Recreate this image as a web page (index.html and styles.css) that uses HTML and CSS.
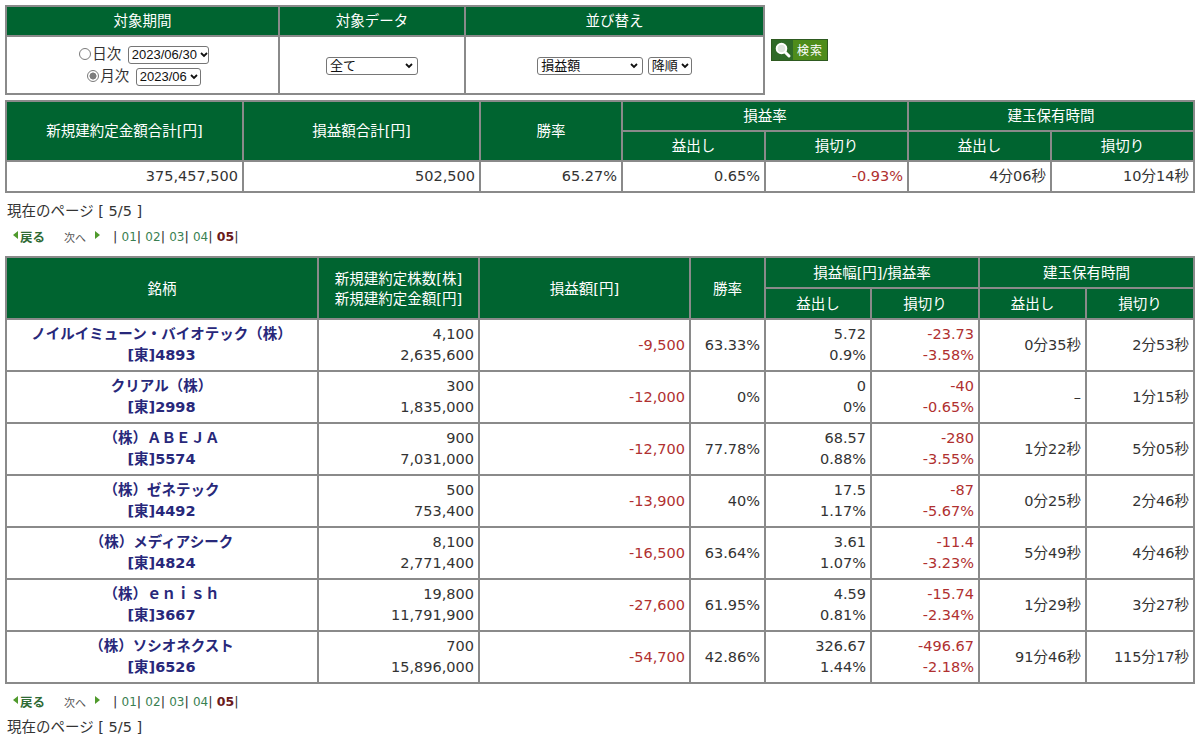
FILE: index.html
```html
<!DOCTYPE html>
<html lang="ja">
<head>
<meta charset="utf-8">
<title>取引実績</title>
<link rel="stylesheet" href="styles.css">
</head>
<body>
<div class="search-bar">
  <table class="grid filter">
    <colgroup><col class="f1"><col class="f2"><col class="f3"></colgroup>
    <tr><th>対象期間</th><th>対象データ</th><th>並び替え</th></tr>
    <tr>
      <td class="center">
        <div class="period"><span class="radio"></span>日次 <span class="select s-day">2023/06/30<svg class="chev" viewBox="0 0 8 6" width="8" height="6"><path d="M1 1L4 4L7 1" fill="none" stroke="#111" stroke-width="1.8"/></svg></span></div>
        <div class="period"><span class="radio on"></span>月次 <span class="select s-month">2023/06<svg class="chev" viewBox="0 0 8 6" width="8" height="6"><path d="M1 1L4 4L7 1" fill="none" stroke="#111" stroke-width="1.8"/></svg></span></div>
      </td>
      <td class="center"><span class="select s-data">全て<svg class="chev" viewBox="0 0 8 6" width="8" height="6"><path d="M1 1L4 4L7 1" fill="none" stroke="#111" stroke-width="1.8"/></svg></span></td>
      <td class="center"><span class="select s-sort">損益額<svg class="chev" viewBox="0 0 8 6" width="8" height="6"><path d="M1 1L4 4L7 1" fill="none" stroke="#111" stroke-width="1.8"/></svg></span> <span class="select s-order">降順<svg class="chev" viewBox="0 0 8 6" width="8" height="6"><path d="M1 1L4 4L7 1" fill="none" stroke="#111" stroke-width="1.8"/></svg></span></td>
    </tr>
  </table>
  <div class="search-btn">
    <span class="btn-icon"><svg viewBox="0 0 20 20" width="20" height="20"><circle cx="8.5" cy="8.5" r="4.8" fill="#dfe6df" stroke="#fff" stroke-width="2"/><path d="M12.2 12.2L16 16" stroke="#fff" stroke-width="3" stroke-linecap="round"/></svg></span>
    <span class="btn-label">検索</span>
  </div>
</div>

<table class="grid summary">
  <colgroup><col class="s1"><col class="s2"><col class="s3"><col class="s4"><col class="s5"><col class="s6"><col class="s7"></colgroup>
  <tr>
    <th rowspan="2">新規建約定金額合計[円]</th>
    <th rowspan="2">損益額合計[円]</th>
    <th rowspan="2">勝率</th>
    <th colspan="2">損益率</th>
    <th colspan="2">建玉保有時間</th>
  </tr>
  <tr><th>益出し</th><th>損切り</th><th>益出し</th><th>損切り</th></tr>
  <tr>
    <td>375,457,500</td>
    <td>502,500</td>
    <td>65.27%</td>
    <td>0.65%</td>
    <td class="neg">-0.93%</td>
    <td>4分06秒</td>
    <td>10分14秒</td>
  </tr>
</table>

<p class="page-info">現在のページ [ 5/5 ]</p>
<div class="pager">
  <span class="prev"><svg class="tri" viewBox="0 0 5 8" width="5" height="8"><path d="M5 0V8L0 4Z" fill="#4f9a2c"/></svg>戻る</span>
  <span class="next">次へ<svg class="tri" viewBox="0 0 5 8" width="5" height="8"><path d="M0 0V8L5 4Z" fill="#4f9a2c"/></svg></span>
  <span class="pages"><span class="bar">|</span> <a>01</a><span class="bar">|</span> <a>02</a><span class="bar">|</span> <a>03</a><span class="bar">|</span> <a>04</a><span class="bar">|</span> <b>05</b><span class="bar">|</span></span>
</div>

<table class="grid main">
  <colgroup><col class="m1"><col class="m2"><col class="m3"><col class="m4"><col class="m5"><col class="m6"><col class="m7"><col class="m8"></colgroup>
  <tr>
    <th rowspan="2">銘柄</th>
    <th rowspan="2">新規建約定株数[株]<br>新規建約定金額[円]</th>
    <th rowspan="2">損益額[円]</th>
    <th rowspan="2">勝率</th>
    <th colspan="2">損益幅[円]/損益率</th>
    <th colspan="2">建玉保有時間</th>
  </tr>
  <tr><th>益出し</th><th>損切り</th><th>益出し</th><th>損切り</th></tr>
  <tr>
    <td class="name">ノイルイミューン・バイオテック（株）<br>[東]4893</td>
    <td>4,100<br>2,635,600</td>
    <td class="neg">-9,500</td>
    <td>63.33%</td>
    <td>5.72<br>0.9%</td>
    <td class="neg">-23.73<br>-3.58%</td>
    <td>0分35秒</td>
    <td>2分53秒</td>
  </tr>
  <tr>
    <td class="name">クリアル（株）<br>[東]2998</td>
    <td>300<br>1,835,000</td>
    <td class="neg">-12,000</td>
    <td>0%</td>
    <td>0<br>0%</td>
    <td class="neg">-40<br>-0.65%</td>
    <td>–</td>
    <td>1分15秒</td>
  </tr>
  <tr>
    <td class="name">（株）ＡＢＥＪＡ<br>[東]5574</td>
    <td>900<br>7,031,000</td>
    <td class="neg">-12,700</td>
    <td>77.78%</td>
    <td>68.57<br>0.88%</td>
    <td class="neg">-280<br>-3.55%</td>
    <td>1分22秒</td>
    <td>5分05秒</td>
  </tr>
  <tr>
    <td class="name">（株）ゼネテック<br>[東]4492</td>
    <td>500<br>753,400</td>
    <td class="neg">-13,900</td>
    <td>40%</td>
    <td>17.5<br>1.17%</td>
    <td class="neg">-87<br>-5.67%</td>
    <td>0分25秒</td>
    <td>2分46秒</td>
  </tr>
  <tr>
    <td class="name">（株）メディアシーク<br>[東]4824</td>
    <td>8,100<br>2,771,400</td>
    <td class="neg">-16,500</td>
    <td>63.64%</td>
    <td>3.61<br>1.07%</td>
    <td class="neg">-11.4<br>-3.23%</td>
    <td>5分49秒</td>
    <td>4分46秒</td>
  </tr>
  <tr>
    <td class="name">（株）ｅｎｉｓｈ<br>[東]3667</td>
    <td>19,800<br>11,791,900</td>
    <td class="neg">-27,600</td>
    <td>61.95%</td>
    <td>4.59<br>0.81%</td>
    <td class="neg">-15.74<br>-2.34%</td>
    <td>1分29秒</td>
    <td>3分27秒</td>
  </tr>
  <tr>
    <td class="name">（株）ソシオネクスト<br>[東]6526</td>
    <td>700<br>15,896,000</td>
    <td class="neg">-54,700</td>
    <td>42.86%</td>
    <td>326.67<br>1.44%</td>
    <td class="neg">-496.67<br>-2.18%</td>
    <td>91分46秒</td>
    <td>115分17秒</td>
  </tr>
</table>

<div class="pager pager-bottom">
  <span class="prev"><svg class="tri" viewBox="0 0 5 8" width="5" height="8"><path d="M5 0V8L0 4Z" fill="#4f9a2c"/></svg>戻る</span>
  <span class="next">次へ<svg class="tri" viewBox="0 0 5 8" width="5" height="8"><path d="M0 0V8L5 4Z" fill="#4f9a2c"/></svg></span>
  <span class="pages"><span class="bar">|</span> <a>01</a><span class="bar">|</span> <a>02</a><span class="bar">|</span> <a>03</a><span class="bar">|</span> <a>04</a><span class="bar">|</span> <b>05</b><span class="bar">|</span></span>
</div>
<p class="page-info page-info-bottom">現在のページ [ 5/5 ]</p>
</body>
</html>
```

FILE: styles.css
```css
* { box-sizing: border-box; }
html, body { margin: 0; }
body {
  padding: 5px;
  background: #fff;
  color: #333;
  font-family: "DejaVu Sans", "Noto Sans CJK JP", sans-serif;
  font-size: 14.5px;
  line-height: 20px;
}

/* search area */
.search-bar { display: flex; align-items: center; gap: 6px; }

table.grid {
  border-collapse: separate;
  border-spacing: 0;
  border: 1px solid #8a8a8a;
  table-layout: fixed;
}
.grid th, .grid td { border: 1px solid #8a8a8a; }
.grid th {
  background: #006430;
  color: #fff;
  font-weight: normal;
  padding: 4px 4px;
  line-height: 20px;
  text-align: center;
}
.grid td {
  padding: 4px 4px;
  line-height: 21px;
  text-align: right;
  background: #fff;
  white-space: nowrap;
}

.filter { width: 760px; }
.f1 { width: 273px; }
.f2 { width: 186px; }
.f3 { width: 299px; }
.filter td.center { text-align: center; padding: 6px 4px; }
.period { line-height: 22px; height: 22px; padding-left: 3px; }

.radio {
  display: inline-block;
  width: 12px;
  height: 12px;
  border: 1px solid #7a7a7a;
  border-radius: 50%;
  background: #fff;
  vertical-align: -1px;
  margin-right: 1px;
}
.radio.on { background: radial-gradient(circle, #7d7d7d 0 3.2px, #fff 3.8px); }

.select {
  display: inline-flex;
  align-items: center;
  justify-content: space-between;
  height: 18px;
  padding: 0 4px 0 3px;
  border: 1px solid #767676;
  border-radius: 3px;
  background: #fff;
  color: #111;
  font-family: "Liberation Sans", "Noto Sans CJK JP", sans-serif;
  font-size: 13px;
  line-height: 16px;
  vertical-align: middle;
  text-align: left;
}
.period .select { margin-left: 2px; }
.chev { flex: none; margin-left: 3px; }
.s-day { width: 81px; }
.s-month { width: 65px; }
.s-data { width: 92px; }
.s-sort { width: 106px; }
.s-order { width: 44px; }

.search-btn {
  display: flex;
  height: 22px;
  width: 57px;
  border: 1px solid #2e5a20;
}
.btn-icon {
  width: 21px;
  background: #2f6a28;
  display: flex;
  align-items: center;
  justify-content: center;
}
.btn-label {
  flex: 1;
  background: #4e8c1b;
  color: #fff;
  font-family: "Noto Sans CJK JP", sans-serif;
  font-size: 12px;
  line-height: 20px;
  text-align: center;
  letter-spacing: 1px;
}

/* summary */
.summary { width: 1190px; margin-top: 5px; }
.s1 { width: 237px; }
.s2 { width: 237px; }
.s3 { width: 142px; }
.s4 { width: 143px; }
.s5 { width: 143px; }
.s6 { width: 143px; }
.s7 { width: 143px; }

.neg { color: #b03030; }

/* pager */
.page-info { margin: 8px 0 0 2px; line-height: 20px; }
.pager {
  margin-top: 6px;
  padding-left: 8px;
  height: 20px;
  line-height: 20px;
  display: flex;
  align-items: center;
  white-space: nowrap;
}
.pager .tri { flex: none; }
.prev {
  display: inline-flex;
  align-items: flex-start;
  color: #2f6b35;
  font-weight: bold;
  font-size: 12.5px;
  font-family: "Noto Sans CJK JP", sans-serif;
}
.prev .tri { margin: 4px 2px 0 0; }
.next {
  display: inline-flex;
  align-items: flex-start;
  margin-left: 19px;
  color: #555;
  font-size: 11px;
  line-height: 16px;
  font-family: "Noto Sans CJK JP", sans-serif;
}
.next .tri { margin: 2px 0 0 9px; }
.pages { margin-left: 13px; font-size: 13px; color: #333; }
.pages a { color: #3a7f52; font-size: 12px; }
.pages b { color: #6a1a1a; font-size: 12.5px; }
.bar { color: #333; }

/* main list */
.main { width: 1190px; margin-top: 9px; }
.main th { padding: 5px 4px 4px; }
.m1 { width: 312px; }
.m2 { width: 161px; }
.m3 { width: 211px; }
.m4 { width: 75px; }
.m5 { width: 106px; }
.m6 { width: 108px; }
.m7 { width: 107px; }
.m8 { width: 108px; }
.main td { padding: 4px 4px 4px 3px; }
.main td.name {
  text-align: center;
  font-weight: bold;
  color: #28287a;
}

.pager-bottom { margin-top: 8px; }
.page-info-bottom { margin-top: 5px; }
```
